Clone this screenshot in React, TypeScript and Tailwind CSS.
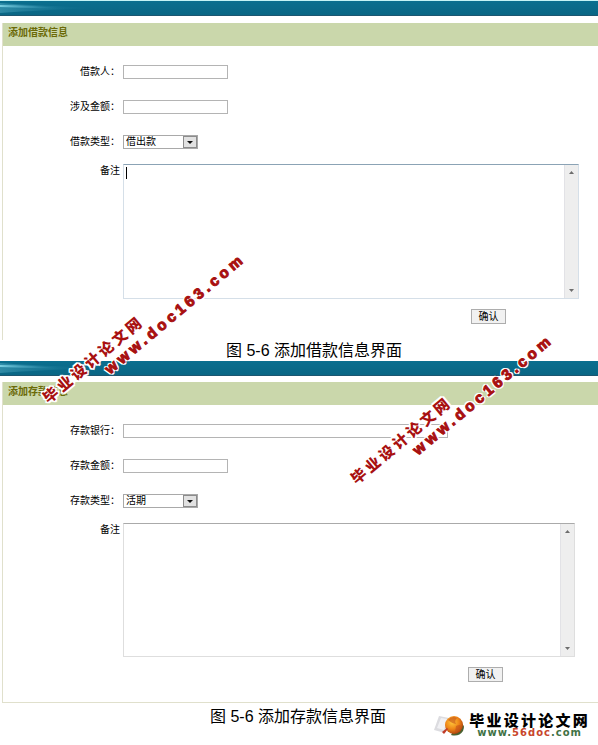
import { useId, type ReactNode } from "react";

interface FieldConfig {
  label: string;
  wide?: boolean;
}

interface LoanFormProps {
  title: string;
  fields: FieldConfig[];
  typeLabel: string;
  typeOptions: string[];
  focused?: boolean;
}

function TopBar() {
  return (
    <div className="relative h-[15px] overflow-hidden border-b border-[#1c5670] bg-linear-to-b from-[#0a6f8f] to-[#0a6684]">
      <svg
        className="absolute top-0 left-0 h-[14px] w-[100px]"
        viewBox="0 0 100 14"
        aria-hidden="true"
      >
        <defs>
          <linearGradient id="glow" x1="0" x2="1" y1="0" y2="0">
            <stop offset="0" stopColor="#7fd4e6" stopOpacity="0.9" />
            <stop offset="0.4" stopColor="#4aa5bf" stopOpacity="0.6" />
            <stop offset="1" stopColor="#0a6f8f" stopOpacity="0" />
          </linearGradient>
        </defs>
        <path d="M0 2 Q40 5 100 7 Q40 9 0 12Z" fill="url(#glow)" opacity="0.35" />
        <path d="M0 4 Q30 4 70 8 Q30 7 0 6Z" fill="url(#glow)" />
      </svg>
    </div>
  );
}

function FormRow({
  id,
  label,
  children,
}: {
  id: string;
  label: string;
  children: ReactNode;
}) {
  return (
    <div className="flex items-center gap-[3px]">
      <label htmlFor={id} className="w-[117px] shrink-0 text-right">
        {label}
      </label>
      {children}
    </div>
  );
}

function Arrow({ up }: { up?: boolean }) {
  return (
    <svg className="h-[3px] w-[5px]" viewBox="0 0 5 3" aria-hidden="true">
      <path d={up ? "M0 3 2.5 0 5 3Z" : "M0 0H5L2.5 3Z"} fill="#6d6d6d" />
    </svg>
  );
}

function LoanForm({
  title,
  fields,
  typeLabel,
  typeOptions,
  focused = false,
}: LoanFormProps) {
  const id = useId();

  return (
    <form
      className={`ml-[2px] border-l border-[#e0e0cc] text-[10px] leading-[14px] text-black ${
        focused ? "pb-[16px]" : "border-b pb-[20px]"
      }`}
      onSubmit={(event) => event.preventDefault()}
    >
      <h2 className="h-[23px] bg-[#cad7ab] pt-[3px] pl-[5px] font-bold text-[#6b6a08]">
        {title}
      </h2>

      <div className="flex flex-col gap-[21px] pt-[19px]">
        {fields.map((field, index) => (
          <FormRow key={field.label} id={`${id}-${index}`} label={field.label}>
            <input
              id={`${id}-${index}`}
              type="text"
              className={`h-[14px] border border-[#b4b4b4] bg-white px-[2px] outline-none ${
                field.wide ? "w-[325px]" : "w-[105px]"
              }`}
            />
          </FormRow>
        ))}

        <FormRow id={`${id}-type`} label={typeLabel}>
          <span className="flex h-[14px] w-[75px] border border-[#a9a9a9] bg-white">
            <select
              id={`${id}-type`}
              className="min-w-0 flex-1 appearance-none pl-[2px] leading-[12px] outline-none"
            >
              {typeOptions.map((option) => (
                <option key={option}>{option}</option>
              ))}
            </select>
            <span className="flex w-[14px] items-center justify-center border border-[#8c8c8c] bg-[#e2e2e2]">
              <svg className="h-[3px] w-[6px]" viewBox="0 0 6 3" aria-hidden="true">
                <path d="M0 0H6L3 3Z" fill="#111" />
              </svg>
            </span>
          </span>
        </FormRow>
      </div>

      <div className="mt-[15px] flex items-start gap-[3px]">
        <label htmlFor={`${id}-note`} className="w-[117px] shrink-0 text-right">
          备注
        </label>
        <div
          className={`flex flex-1 border ${
            focused
              ? "mr-[19px] h-[135px] border-[#d5dfe8] border-t-[#8ba3b5]"
              : "mr-[23px] h-[134px] border-[#dedede] border-t-[#aaaaaa]"
          }`}
        >
          {focused && <span className="mt-[2px] ml-[2px] h-[12px] w-px bg-black" />}
          <textarea
            id={`${id}-note`}
            className="min-w-0 flex-1 resize-none overflow-hidden px-[2px] outline-none"
          />
          <div className="flex w-[14px] flex-col items-center justify-between border-l border-[#e2e2e6] bg-[#eeeeee] py-[6px]">
            <Arrow up />
            <Arrow />
          </div>
        </div>
      </div>

      <div
        className={`mt-[10px] flex justify-end ${
          focused ? "pr-[92px]" : "pr-[95px]"
        }`}
      >
        <button
          type="submit"
          className="h-[15px] w-[35px] border border-[#adadad] bg-[#f1f1f1] leading-[12px]"
        >
          确认
        </button>
      </div>
    </form>
  );
}

function Watermark({ className }: { className: string }) {
  return (
    <div
      className={`pointer-events-none absolute -rotate-40 font-bold whitespace-nowrap text-[#a81010] [text-shadow:2px_0_white,-2px_0_white,0_2px_white,0_-2px_white,1px_1px_white,-1px_-1px_white,1px_-1px_white,-1px_1px_white] ${className}`}
    >
      <p className="text-[15px] leading-[17px] font-black tracking-[0.2em]">
        毕业设计论文网
      </p>
      <p className="ml-[66px] text-[15px] leading-[17px] tracking-[0.25em] [-webkit-text-stroke:1px_#a81010]">
        www.doc163.com
      </p>
    </div>
  );
}

function SiteLogo() {
  return (
    <a href="#" className="mr-[8px] flex items-center gap-[3px] pt-[6px] font-bold">
      <svg className="h-[26px] w-[32px]" viewBox="0 0 32 26" aria-hidden="true">
        <defs>
          <radialGradient id="globe" cx="0.4" cy="0.35" r="0.7">
            <stop offset="0" stopColor="#ffc93c" />
            <stop offset="0.55" stopColor="#ee8417" />
            <stop offset="1" stopColor="#a83a0c" />
          </radialGradient>
        </defs>
        <path d="M5 4 15 6 11 21 0 18Z" fill="#dcdce0" />
        <path d="M7 6 13 7 10 18 3 16Z" fill="#f1f1f4" />
        <path d="M25 9Q32 13 29 19Q25 25 17 23Z" fill="#4a6030" />
        <circle cx="20" cy="13" r="9" fill="url(#globe)" />
        <path
          d="M14 8Q18 3 23 6Q20 9 22 12Q17 11 14 8ZM22 14Q26 12 27 14Q25 19 21 20Z"
          fill="#c4511a"
          opacity="0.6"
        />
        <path d="M8 20 13 16 14 17 10 22Z" fill="#c03a28" />
      </svg>
      <span className="flex flex-col items-center">
        <span className="text-[15px] leading-[15px] font-black tracking-[0.15em] text-black">
          毕业设计论文网
        </span>
        <span className="font-['DejaVu_Sans',sans-serif] text-[10px] leading-[10px] tracking-widest text-[#3f7245]">
          www.<span className="text-[#c8452a]">56doc</span>.com
        </span>
      </span>
    </a>
  );
}

export default function App() {
  return (
    <main className="relative overflow-hidden bg-white font-['Liberation_Sans','Noto_Sans_CJK_SC',sans-serif]">
      <section className="border-t border-[#c4f3f5]">
        <TopBar />
        <div className="mt-[7px]">
          <LoanForm
            title="添加借款信息"
            fields={[{ label: "借款人：" }, { label: "涉及金额：" }]}
            typeLabel="借款类型："
            typeOptions={["借出款", "借入款"]}
            focused
          />
        </div>
        <p className="pl-[226px] text-[16px] leading-[21px] text-black">
          图 5-6 添加借款信息界面
        </p>
      </section>

      <section>
        <TopBar />
        <div className="mt-[6px]">
          <LoanForm
            title="添加存款信息"
            fields={[{ label: "存款银行：", wide: true }, { label: "存款金额：" }]}
            typeLabel="存款类型："
            typeOptions={["活期", "定期"]}
          />
        </div>
        <div className="flex items-start justify-between pt-[3px] pl-[210px]">
          <p className="text-[16px] leading-[21px] text-black">
            图 5-6 添加存款信息界面
          </p>
          <SiteLogo />
        </div>
      </section>

      <Watermark className="top-[311px] left-[22px]" />
      <Watermark className="top-[392px] left-[330px]" />
    </main>
  );
}
